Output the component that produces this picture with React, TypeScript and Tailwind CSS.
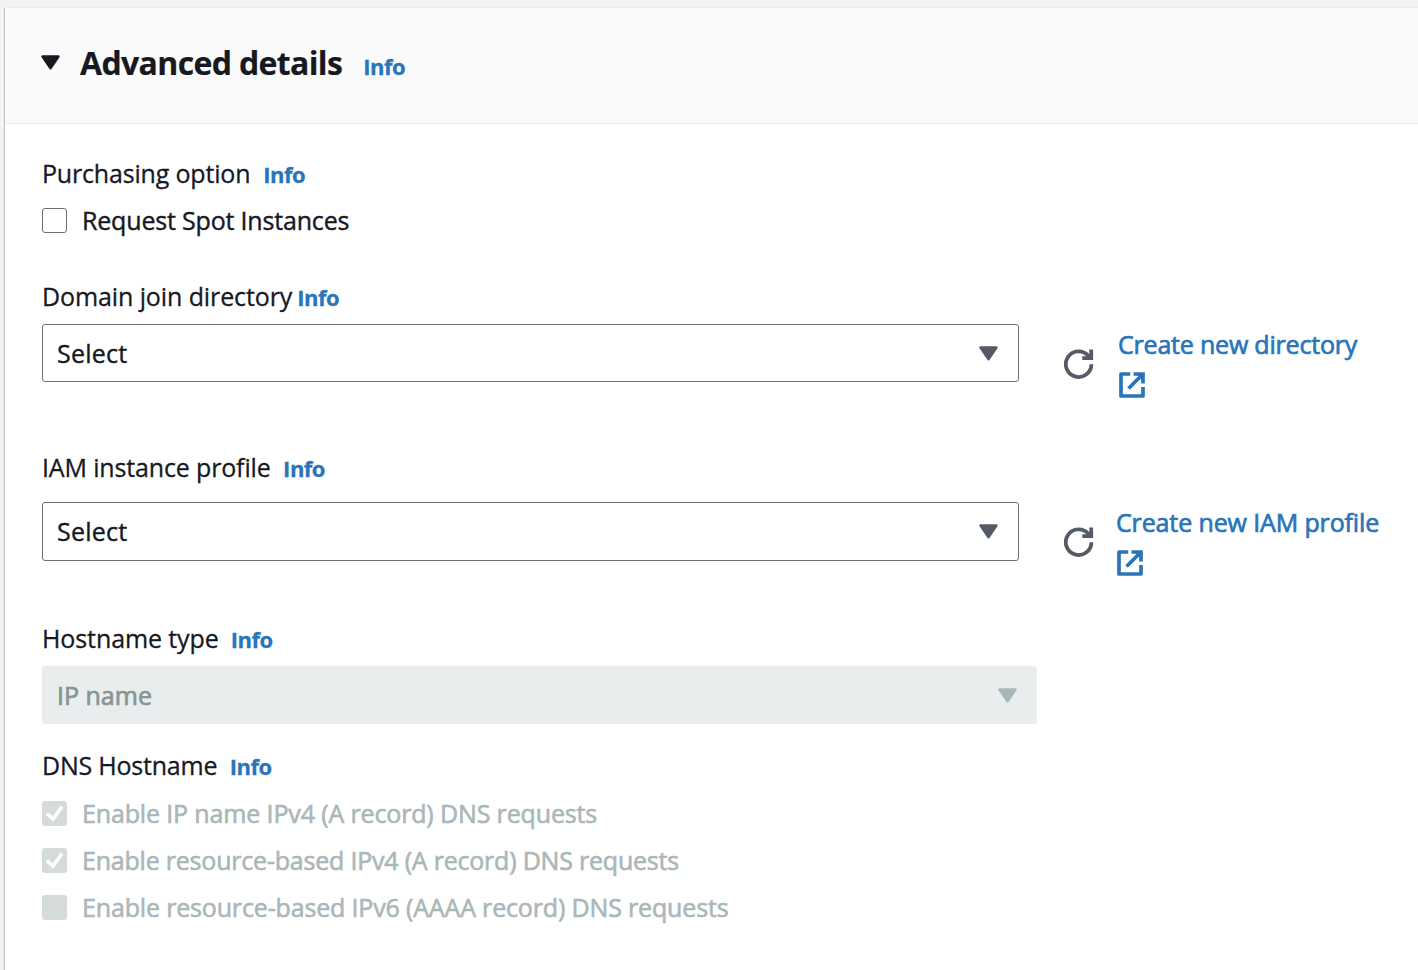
import type { ReactNode } from "react";

function Caret({ className = "" }: { className?: string }) {
  return (
    <svg viewBox="0 0 19 15" className={`h-[15px] w-[19px] shrink-0 ${className}`}>
      <path d="M1.5 1.5 H17.5 L9.5 13.2 Z" fill="currentColor" stroke="currentColor" strokeWidth="2.4" strokeLinejoin="round" />
    </svg>
  );
}

function Refresh() {
  return (
    <svg viewBox="0 0 30 30" className="h-[30px] w-[30px] shrink-0 text-[#545b64]" fill="none" stroke="currentColor" strokeWidth="3.8">
      <path d="M27.4 15.2 A12.8 12.8 0 1 1 24.6 7.2" />
      <path d="M27.2 0.5 V9.2 H18.3" />
      <path d="M22 8.5 L26.5 4.5 V8.5 Z" fill="currentColor" stroke="none" />
    </svg>
  );
}

function External() {
  return (
    <svg viewBox="0 0 26 26" className="block h-[26px] w-[26px] text-[#2a74ba]" fill="none" stroke="currentColor" strokeWidth="3.7">
      <path d="M11.2 2 H2 V24 H24 V15" strokeLinejoin="round" />
      <path d="M14.5 2 H24 V11.5" />
      <path d="M18 3 H23 V8 Z" fill="currentColor" stroke="none" />
      <path d="M23.5 2.5 L9.5 16.5" />
    </svg>
  );
}

function Info({ className = "" }: { className?: string }) {
  return (
    <a href="#" className={`text-[22px] font-bold tracking-[-0.5px] text-[#2a74ba] [-webkit-text-stroke:0.3px_currentColor] ${className}`}>
      Info
    </a>
  );
}

function Label({ children, className = "", gap = "ml-[13px]", tracking }: { children: ReactNode; className?: string; gap?: string; tracking: string }) {
  return (
    <div className={`flex h-10 items-baseline leading-10 ${className}`}>
      <span className={`[-webkit-text-stroke:0.3px_currentColor] ${tracking}`}>{children}</span>
      <Info className={gap} />
    </div>
  );
}

function Select({ height }: { height: string }) {
  return (
    <button className={`flex ${height} w-[977px] shrink-0 items-center justify-between rounded-[3px] border border-[#687078] pr-5 pl-[14px]`}>
      <span className="pt-px tracking-[0.25px] [-webkit-text-stroke:0.4px_currentColor]">Select</span>
      <Caret className="text-[#545b64]" />
    </button>
  );
}

function CreateLink({ children, className, tracking }: { children: ReactNode; className: string; tracking: string }) {
  return (
    <a href="#" className={`block text-[#2a74ba] ${className}`}>
      <span className={`block h-10 leading-10 whitespace-nowrap [-webkit-text-stroke:0.7px_currentColor] ${tracking}`}>{children}</span>
      <span className="mt-[7.5px] block pl-px">
        <External />
      </span>
    </a>
  );
}

function DisabledCheck({ checked, children, tracking }: { checked?: boolean; children: ReactNode; tracking: string }) {
  return (
    <label className="flex h-[47px] items-center text-[#aab7b8]">
      <span className="mr-[15px] h-[25px] w-[25px] rounded-[3px] bg-[#d5dbdb]">
        {checked && (
          <svg viewBox="0 0 25 25" className="h-[25px] w-[25px]" fill="none" stroke="white" strokeWidth="3.6">
            <path d="M4.8 12.7 L11 18 L20 5.5" />
          </svg>
        )}
      </span>
      <span className={`[-webkit-text-stroke:0.6px_currentColor] ${tracking}`}>{children}</span>
    </label>
  );
}

export default function App() {
  return (
    <div className="h-[970px] w-[1418px] overflow-hidden bg-[#f2f3f3] pt-[7px] pl-[5px] font-['Open_Sans','Noto_Sans',sans-serif] text-[25px] text-[#16191f]">
      <section className="h-[963px] border-t border-[#eaeded] bg-white shadow-[-1px_1px_1px_0_rgba(0,28,36,0.2)]">
        <header className="flex h-[116px] border-b border-[#eaeded] bg-[#fafafa] pt-[30px] pl-9">
          <Caret className="mt-[17px]" />
          <h2 className="ml-5 flex h-[50px] items-baseline leading-[50px]">
            <span className="text-[32px] font-bold tracking-[-0.65px] [-webkit-text-stroke:0.2px_currentColor]">Advanced details</span>
            <Info className="ml-[21px]" />
          </h2>
        </header>

        <div className="flex flex-col pt-[29px] pl-[37px]">
          <Label tracking="tracking-[-0.18px]">Purchasing option</Label>
          <label className="mt-1 flex h-[47px] items-center">
            <span className="mr-[15px] h-[25px] w-[25px] rounded-[3px] border-[1.5px] border-[#687078]" />
            <span className="tracking-[-0.18px] [-webkit-text-stroke:0.4px_currentColor]">Request Spot Instances</span>
          </label>

          <Label className="mt-8" gap="ml-[5px]" tracking="tracking-[-0.1px]">Domain join directory</Label>
          <div className="mt-2 flex h-[58px]">
            <Select height="h-[58px]" />
            <div className="mt-[25px] ml-[45px]"><Refresh /></div>
            <CreateLink className="ml-6" tracking="tracking-[-0.2px]">Create new directory</CreateLink>
          </div>

          <Label className="mt-[65px]" gap="ml-[12.5px]" tracking="tracking-[-0.15px]">IAM instance profile</Label>
          <div className="mt-[15px] flex h-[59px]">
            <Select height="h-[59px]" />
            <div className="mt-[25px] ml-[45px]"><Refresh /></div>
            <CreateLink className="ml-[22px]" tracking="tracking-[-0.13px]">Create new IAM profile</CreateLink>
          </div>

          <Label className="mt-[57px]" gap="ml-3" tracking="tracking-[-0.1px]">Hostname type</Label>
          <div className="mt-2 flex h-[58px] w-[995px] items-center justify-between rounded-[3px] bg-[#e9eded] pr-5 pl-[15px] text-[#879596]">
            <span className="pt-0.5 tracking-[0px] [-webkit-text-stroke:0.7px_currentColor]">IP name</span>
            <Caret className="text-[#aab7b8]" />
          </div>

          <Label className="mt-[21px]" gap="ml-[12.5px]" tracking="tracking-[-0.22px]">DNS Hostname</Label>
          <div className="mt-[5px]">
            <DisabledCheck checked tracking="tracking-[-0.14px]">Enable IP name IPv4 (A record) DNS requests</DisabledCheck>
            <DisabledCheck checked tracking="tracking-[-0.21px]">Enable resource-based IPv4 (A record) DNS requests</DisabledCheck>
            <DisabledCheck tracking="tracking-[-0.16px]">Enable resource-based IPv6 (AAAA record) DNS requests</DisabledCheck>
          </div>
        </div>
      </section>
    </div>
  );
}
